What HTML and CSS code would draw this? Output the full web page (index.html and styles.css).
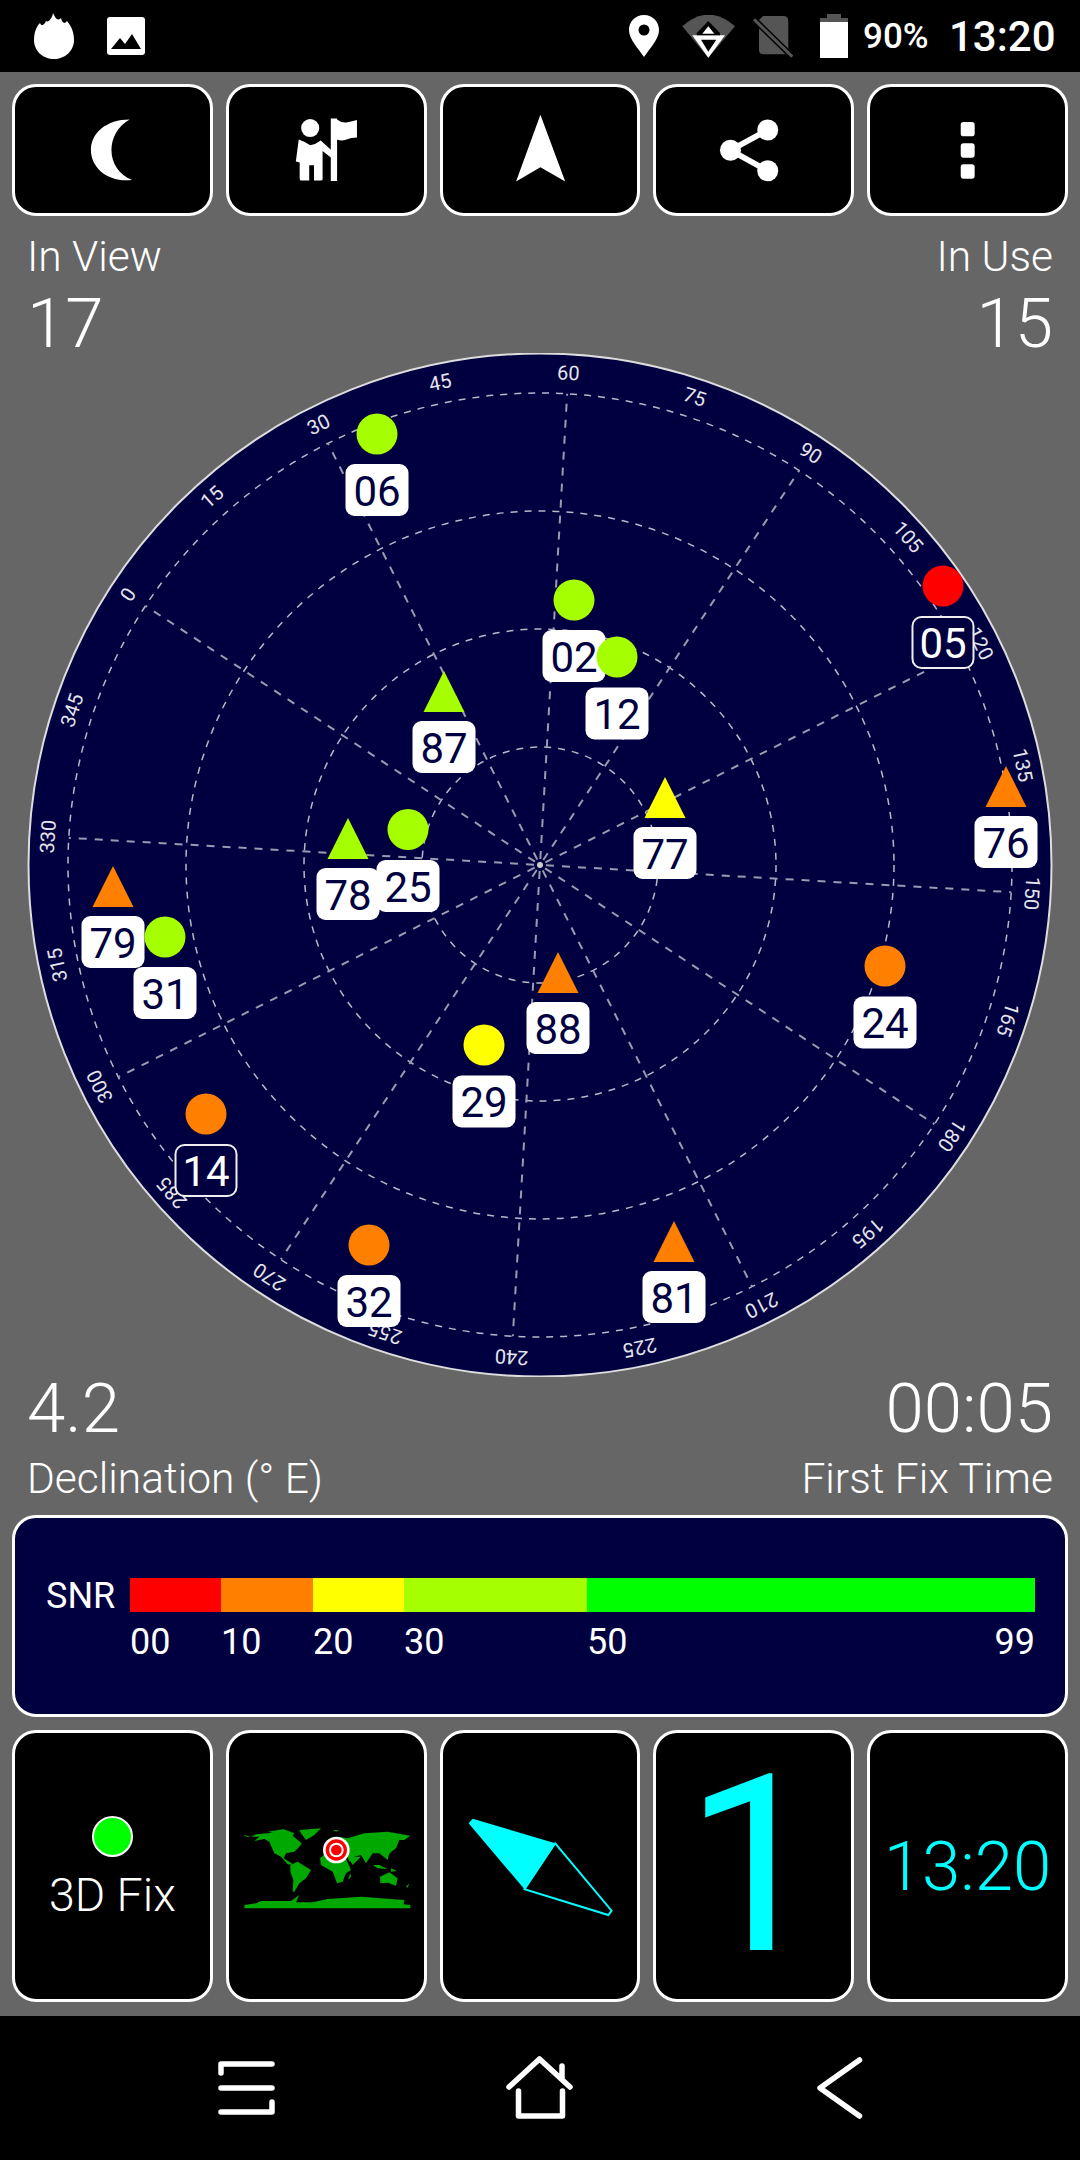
FILE: index.html
```html
<!DOCTYPE html>
<html lang="en">
<head>
<meta charset="utf-8">
<title>GPS Test</title>
<link rel="stylesheet" href="styles.css">
</head>
<body>
<div class="app">
  <header class="status">
    <div class="status-left">
      <svg class="ico-flame" viewBox="0 0 40 46"><path d="M19 0 C21 4 23 9 27 5 C28 9 30 12 33 8 C38 14 40 20 40 27 C40 38 31 46 20 46 C9 46 0 38 0 27 C0 20 2 14 6 10 C7 13 10 13 12 8 C14 10 18 6 19 0Z"/></svg>
      <svg class="ico-image" viewBox="0 0 38 38"><rect width="38" height="38" rx="3" fill="#fff"/><path d="M4 32 L13 21 L18 27 L25 17 L34 32Z" fill="#000"/></svg>
    </div>
    <div class="status-right">
      <svg class="ico-pin" viewBox="0 0 30 42"><path fill-rule="evenodd" d="M15 0 C24 0 30 7 30 15 C30 24 21 33 15 42 C9 33 0 24 0 15 C0 7 6 0 15 0Z M15 9.500 A5.500 5.500 0 1 0 15 20.500 A5.500 5.500 0 1 0 15 9.500Z"/></svg>
      <svg class="ico-wifi" viewBox="683 14 53 43"><path d="M683.300 25.300 Q709.300 2 736 25.300 L709.300 56.700Z" fill="#555"/><path d="M693.300 34.300 H726 L709.300 56.700Z" fill="#fff"/><path d="M697.700 32 L709.300 20 L721 32 V34.300 H697.700Z" fill="#000"/><path d="M703.300 32.700 H715.300 L709.300 25.300Z" fill="#fff"/><path d="M702 38.700 H717.300 L709.300 50.700Z" fill="#000"/></svg>
      <svg class="ico-sim" viewBox="754 14 40 44"><path d="M764 16 H784 Q789.300 16 789.300 21 V50 Q789.300 54.300 785 54.300 H765 Q760 54.300 760 50 V20Z" fill="#555"/><path d="M755 19.300 L793.300 56.700" stroke="#000" stroke-width="6"/><path d="M755 19.300 L793.300 56.700" stroke="#555" stroke-width="3"/></svg>
      <svg class="ico-batt" viewBox="0 0 28 44"><path d="M7 0 H21 V4 H28 V8 H0 V4 H7Z" fill="#555"/><rect y="8" width="28" height="36" fill="#fff"/></svg>
      <span class="batt-pct">90%</span>
      <span class="clock">13:20</span>
    </div>
  </header>

  <main class="content">
    <div class="tiles tiles-top">
      <div class="tile">
        <svg class="tile-svg" viewBox="13 84 200 132"><path d="M131 118 C107 118 90.500 132 90.500 150 C90.500 168 107 184 133.600 181.500 C120 176 112 164 112 150 C112 137 119 125 131 118Z"/></svg>
      </div>
      <div class="tile">
        <svg class="tile-svg" viewBox="226 84 200 132"><circle cx="309" cy="127" r="9.500"/><rect x="330.600" y="117" width="6.600" height="65.500"/><path d="M337 118 Q342 122 348 121 Q353 120 358 118.500 V137 Q352 137 347 139 Q342 141 337 139Z"/><path d="M297 139 Q303 141 309 145 Q315 144 320 140 L331 150 V158 L322 151 V181 Q322 182 320 182 H313 V166 H308 V182 H300 Q298 182 298 180 V163 L294 162Z"/></svg>
      </div>
      <div class="tile">
        <svg class="tile-svg" viewBox="440 84 200 132"><path d="M540 113 L566 183 L540 168 L514.500 183Z"/></svg>
      </div>
      <div class="tile">
        <svg class="tile-svg" viewBox="653 84 200 132"><circle cx="768" cy="129" r="11"/><circle cx="729" cy="150.300" r="11"/><circle cx="768" cy="171.700" r="11"/><path class="share-line" d="M768 129 L729 150.300 L768 171.700"/></svg>
      </div>
      <div class="tile">
        <svg class="tile-svg" viewBox="867 84 200 132"><rect x="960" y="120.700" width="14.600" height="15" rx="3"/><rect x="960" y="143" width="14.600" height="15" rx="3"/><rect x="960" y="165" width="14.600" height="15" rx="3"/></svg>
      </div>
    </div>

    <div class="stats stats-top">
      <div>
        <div class="stat-label">In View</div>
        <div class="stat-value">17</div>
      </div>
      <div class="stat-right">
        <div class="stat-label">In Use</div>
        <div class="stat-value">15</div>
      </div>
    </div>

    <svg class="sky" viewBox="0 353 1080 1024">
      <circle class="disc" cx="540" cy="865" r="511.500"/>
      <g transform="translate(540 865)">
        <g class="rings">
          <circle r="118"/><circle r="236"/><circle r="354"/><circle r="472"/>
        </g>
        <g class="spokes">
          <line y2="-472" transform="rotate(-56.7)"/>
          <line y2="-472" transform="rotate(-26.7)"/>
          <line y2="-472" transform="rotate(3.3)"/>
          <line y2="-472" transform="rotate(33.3)"/>
          <line y2="-472" transform="rotate(63.3)"/>
          <line y2="-472" transform="rotate(93.3)"/>
          <line y2="-472" transform="rotate(123.3)"/>
          <line y2="-472" transform="rotate(153.3)"/>
          <line y2="-472" transform="rotate(183.3)"/>
          <line y2="-472" transform="rotate(213.3)"/>
          <line y2="-472" transform="rotate(243.3)"/>
          <line y2="-472" transform="rotate(273.3)"/>
        </g>
        <circle class="hub" r="3"/>
        <g class="degs">
          <text y="-486" transform="rotate(-56.7)">0</text>
          <text y="-486" transform="rotate(-41.7)">15</text>
          <text y="-486" transform="rotate(-26.7)">30</text>
          <text y="-486" transform="rotate(-11.7)">45</text>
          <text y="-486" transform="rotate(3.3)">60</text>
          <text y="-486" transform="rotate(18.3)">75</text>
          <text y="-486" transform="rotate(33.3)">90</text>
          <text y="-486" transform="rotate(48.3)">105</text>
          <text y="-486" transform="rotate(63.3)">120</text>
          <text y="-486" transform="rotate(78.3)">135</text>
          <text y="-486" transform="rotate(93.3)">150</text>
          <text y="-486" transform="rotate(108.3)">165</text>
          <text y="-486" transform="rotate(123.3)">180</text>
          <text y="-486" transform="rotate(138.3)">195</text>
          <text y="-486" transform="rotate(153.3)">210</text>
          <text y="-486" transform="rotate(168.3)">225</text>
          <text y="-486" transform="rotate(183.3)">240</text>
          <text y="-486" transform="rotate(198.3)">255</text>
          <text y="-486" transform="rotate(213.3)">270</text>
          <text y="-486" transform="rotate(228.3)">285</text>
          <text y="-486" transform="rotate(243.3)">300</text>
          <text y="-486" transform="rotate(258.3)">315</text>
          <text y="-486" transform="rotate(273.3)">330</text>
          <text y="-486" transform="rotate(288.3)">345</text>
        </g>
      </g>

      <g class="sat" transform="translate(377 434)"><circle class="lime" r="20.500"/><rect x="-31.500" y="30" width="63" height="52" rx="9"/><text y="71.500">06</text></g>
      <g class="sat" transform="translate(444 671)"><path class="lime" d="M0 0 L20.500 41 H-20.500Z"/><rect x="-31.500" y="50" width="63" height="52" rx="9"/><text y="91.500">87</text></g>
      <g class="sat" transform="translate(574 600)"><circle class="lime" r="20.500"/><rect x="-31.500" y="30" width="63" height="52" rx="9"/><text y="71.500">02</text></g>
      <g class="sat" transform="translate(617 657)"><circle class="lime" r="20.500"/><rect x="-31.500" y="30.500" width="63" height="52" rx="9"/><text y="72">12</text></g>
      <g class="sat sat-unused" transform="translate(943 586)"><circle class="red" r="20.500"/><rect x="-30.500" y="31" width="61" height="51" rx="9"/><text y="72">05</text></g>
      <g class="sat" transform="translate(1006 766)"><path class="orange" d="M0 0 L20.500 41 H-20.500Z"/><rect x="-31.500" y="50" width="63" height="52" rx="9"/><text y="91.500">76</text></g>
      <g class="sat" transform="translate(665 777)"><path class="yellow" d="M0 0 L20.500 41 H-20.500Z"/><rect x="-31.500" y="50" width="63" height="52" rx="9"/><text y="91.500">77</text></g>
      <g class="sat" transform="translate(348 818)"><path class="lime" d="M0 0 L20.500 41 H-20.500Z"/><rect x="-31.500" y="50" width="63" height="52" rx="9"/><text y="91.500">78</text></g>
      <g class="sat" transform="translate(408 829.500)"><circle class="lime" r="20.500"/><rect x="-31.500" y="30.500" width="63" height="52" rx="9"/><text y="72">25</text></g>
      <g class="sat" transform="translate(113 866)"><path class="orange" d="M0 0 L20.500 41 H-20.500Z"/><rect x="-31.500" y="50" width="63" height="52" rx="9"/><text y="91.500">79</text></g>
      <g class="sat" transform="translate(165 937)"><circle class="lime" r="20.500"/><rect x="-31.500" y="30" width="63" height="52" rx="9"/><text y="71.500">31</text></g>
      <g class="sat" transform="translate(484 1045)"><circle class="yellow" r="20.500"/><rect x="-31.500" y="30.500" width="63" height="52" rx="9"/><text y="72">29</text></g>
      <g class="sat sat-unused" transform="translate(206 1114)"><circle class="orange" r="20.500"/><rect x="-30.500" y="31" width="61" height="51" rx="9"/><text y="72">14</text></g>
      <g class="sat" transform="translate(369 1245)"><circle class="orange" r="20.500"/><rect x="-31.500" y="30" width="63" height="52" rx="9"/><text y="71.500">32</text></g>
      <g class="sat" transform="translate(558 952)"><path class="orange" d="M0 0 L20.500 41 H-20.500Z"/><rect x="-31.500" y="50" width="63" height="52" rx="9"/><text y="91.500">88</text></g>
      <g class="sat" transform="translate(885 966)"><circle class="orange" r="20.500"/><rect x="-31.500" y="30.500" width="63" height="52" rx="9"/><text y="72">24</text></g>
      <g class="sat" transform="translate(674 1221)"><path class="orange" d="M0 0 L20.500 41 H-20.500Z"/><rect x="-31.500" y="50" width="63" height="52" rx="9"/><text y="91.500">81</text></g>
    </svg>

    <div class="stats stats-bottom">
      <div>
        <div class="stat-value">4.2</div>
        <div class="stat-label">Declination (° E)</div>
      </div>
      <div class="stat-right">
        <div class="stat-value">00:05</div>
        <div class="stat-label">First Fix Time</div>
      </div>
    </div>

    <section class="snr">
      <div class="snr-name">SNR</div>
      <div class="snr-scale">
        <div class="snr-bar">
          <div class="seg s-red"></div>
          <div class="seg s-orange"></div>
          <div class="seg s-yellow"></div>
          <div class="seg s-lime"></div>
          <div class="seg s-green"></div>
        </div>
        <div class="snr-ticks">
          <span>00</span><span>10</span><span>20</span><span>30</span>
          <span class="tick-last"><span>50</span><span>99</span></span>
        </div>
      </div>
    </section>

    <div class="tiles tiles-bottom">
      <div class="tile tile-fix">
        <div class="fix-dot"></div>
        <div class="fix-text">3D Fix</div>
      </div>
      <div class="tile tile-map">
        <svg class="map" viewBox="0 0 570 300">
          <g class="land">
            <path d="M40 60 L60 65 L75 58 L110 55 L130 50 L165 45 L190 55 L185 62 L212 85 L205 95 L190 110 L165 115 L158 130 L175 140 L190 150 L170 148 L150 125 L130 115 L115 80 L100 72 L70 78 L85 65 L45 65Z"/>
            <path d="M110 50 L160 42 L165 50 L130 52Z"/>
            <path d="M205 45 L270 40 L250 60 L225 75 L210 55Z"/>
            <path d="M178 150 L200 140 L240 165 L225 190 L205 205 L190 230 L185 230 L187 195 L178 170Z"/>
            <path d="M350 70 L400 55 L470 50 L538 62 L520 75 L505 75 L495 100 L475 115 L470 135 L445 115 L425 115 L405 145 L390 120 L370 125 L355 140 L350 125 L280 120 L290 90 L320 65Z"/>
            <path d="M267 130 L285 115 L340 120 L360 165 L345 175 L335 200 L318 205 L305 170 L270 150Z"/>
            <path d="M350 125 L390 125 L365 150Z"/>
            <path d="M352 190 L358 175 L360 185 L354 192Z"/>
            <path d="M447 185 L475 172 L500 190 L495 212 L470 203 L448 205Z"/>
            <path d="M425 150 L445 150 L470 162 L440 160Z M480 160 L498 168 L480 170Z M470 100 L480 110 L472 120Z M525 215 L535 205 L530 218Z M305 45 L325 46 L315 50Z"/>
            <path d="M40 270 L75 265 L90 258 L180 258 L205 240 L195 262 L245 262 L290 252 L390 245 L520 255 L518 268 L538 270 L538 280 L40 280Z"/>
          </g>
          <circle class="tgt-white" cx="316" cy="105" r="40"/>
          <circle class="tgt-red" cx="316" cy="105" r="32"/>
          <circle class="tgt-white" cx="316" cy="105" r="22"/>
          <circle class="tgt-red" cx="316" cy="105" r="16"/>
        </svg>
      </div>
      <div class="tile">
        <svg class="tile-svg compass" viewBox="440 1730 200 272">
          <path class="needle-fill" d="M468.600 1823.300 L472.700 1818.700 L555.200 1843.300 L524.500 1889.300Z"/>
          <path class="needle-line" d="M555.200 1843.300 L611.600 1910.700 L608.300 1915 L524.500 1889.300Z"/>
        </svg>
      </div>
      <div class="tile tile-num">1</div>
      <div class="tile tile-time">13:20</div>
    </div>
  </main>

  <nav class="navbar">
    <svg class="nav-svg" viewBox="0 2016 1080 144">
      <path d="M221 2073 V2064 H272 M221 2088 H272 M272 2102 V2112 H221"/>
      <path d="M509 2087 L539.500 2059 L570 2087 M562 2066 V2078 M518.500 2091 V2116 H562.500 V2091"/>
      <path d="M859.500 2060 L820 2088 L859.500 2116"/>
    </svg>
  </nav>
</div>
</body>
</html>
```

FILE: styles.css
```css
* { box-sizing: border-box; }
html, body { margin: 0; padding: 0; }
body {
  width: 1080px;
  height: 2160px;
  overflow: hidden;
  background: #666;
  color: #fff;
  font-family: Roboto, "Liberation Sans", sans-serif;
}
svg { display: block; }
.app { display: flex; flex-direction: column; height: 2160px; }

/* status bar */
.status {
  height: 72px;
  background: #000;
  display: flex;
  justify-content: space-between;
  align-items: center;
  padding: 0 27px 0 34px;
  fill: #fff;
}
.status-left, .status-right { display: flex; align-items: center; }
.ico-flame { width: 40px; height: 46px; }
.ico-image { width: 38px; height: 38px; margin-left: 33px; }
.ico-pin { width: 30px; height: 42px; }
.ico-wifi { width: 53px; height: 43px; margin-left: 23px; }
.ico-sim { width: 40px; height: 44px; margin-left: 18px; }
.ico-batt { width: 28px; height: 44px; margin-left: 27px; }
.batt-pct { font-size: 35px; font-weight: 500; margin-left: 15px; width: 64px; white-space: nowrap; }
.clock { font-size: 42px; font-weight: 500; margin-left: 22px; width: 104px; text-align: right; white-space: nowrap; }

/* main column */
.content { flex: 1; display: flex; flex-direction: column; padding: 12px 12px 0; }
.tiles { display: grid; grid-template-columns: repeat(5, 1fr); gap: 13px; }
.tile {
  background: #000;
  border: 3px solid #fff;
  border-radius: 24px;
  fill: #fff;
  overflow: hidden;
}
.tiles-top .tile { height: 132px; }
.tile-svg { width: 100%; height: 100%; }
.share-line { fill: none; stroke: #fff; stroke-width: 6; }

.stats { display: flex; justify-content: space-between; padding: 0 15px; }
.stats-top { margin-top: 17px; height: 120px; }
.stats-top .stat-value { margin-top: 5px; }
.stats-bottom { height: 144px; margin-top: -6px; }
.stats-bottom .stat-label { margin-top: 8px; }
.stat-right { text-align: right; }
.stat-label { font-size: 42.500px; line-height: 48px; font-weight: 300; }
.stat-value { font-size: 69px; line-height: 76px; font-weight: 300; }

/* sky plot */
.sky { width: 1080px; height: 1024px; margin-left: -12px; flex: none; }
.disc { fill: #000040; stroke: #ddd; stroke-width: 2; }
.rings circle { fill: none; stroke: #b8b8c8; stroke-width: 1.500; stroke-dasharray: 7 7; }
.spokes line { stroke: #9a9ab0; stroke-width: 2; stroke-dasharray: 8 8; stroke-dashoffset: 10; }
.hub { fill: #ccc; }
.degs text { fill: #e4e4ec; font-size: 20px; text-anchor: middle; }
.sat rect { fill: #fff; }
.sat text { fill: #000040; font-size: 42px; text-anchor: middle; }
.sat-unused rect { fill: #000040; stroke: #eee; stroke-width: 2; }
.sat-unused text { fill: #fff; }
.lime { fill: #a6ff00; }
.orange { fill: #ff8000; }
.yellow { fill: #ff0; }
.red { fill: #f00; }

/* snr panel */
.snr {
  height: 202px;
  background: #000040;
  border: 3px solid #fff;
  border-radius: 24px;
  display: flex;
  padding: 60px 30px 0 31px;
  margin-bottom: 13px;
}
.snr-name { width: 84px; font-size: 36px; line-height: 36px; font-weight: 400; }
.snr-scale { flex: 1; }
.snr-bar { display: flex; height: 34px; }
.seg { height: 100%; }
.s-red, .snr-ticks > span:nth-child(1) { width: 91px; }
.s-orange, .snr-ticks > span:nth-child(2) { width: 92px; }
.s-yellow, .snr-ticks > span:nth-child(3) { width: 91px; }
.s-lime, .snr-ticks > span:nth-child(4) { width: 183px; }
.s-green { flex: 1; }
.s-red { background: #f00; }
.s-orange { background: #ff8000; }
.s-yellow { background: #ff0; }
.s-lime { background: #a6ff00; }
.s-green { background: #0f0; }
.snr-ticks { display: flex; font-size: 36px; line-height: 44px; margin-top: 8px; }
.tick-last { flex: 1; display: flex; justify-content: space-between; }

/* bottom tiles */
.tiles-bottom .tile {
  height: 272px;
  display: flex;
  align-items: center;
  justify-content: center;
}
.tile-fix { flex-direction: column; }
.fix-dot {
  width: 41px;
  height: 41px;
  border-radius: 50%;
  background: #0f0;
  border: 2px solid #fff;
  margin-top: 6px;
}
.fix-text { font-size: 46.500px; line-height: 54px; font-weight: 300; margin-top: 11px; }
.tile-map { position: relative; }
.map { position: absolute; left: 2px; top: 82px; width: 190px; height: 100px; }
.land { fill: #00a800; }
.tgt-white { fill: #fff; }
.tgt-red { fill: #f00; }
.tile-svg.compass { margin: -3px; width: 200px; height: 272px; flex: none; }
.needle-fill { fill: #0ff; }
.needle-line { fill: none; stroke: #0ff; stroke-width: 2; }
.tile-num { color: #0ff; font-size: 246px; line-height: 1; font-weight: 400; }
.tile-time { color: #0ff; font-size: 69px; font-weight: 300; }

/* nav */
.navbar { height: 144px; background: #000; flex: none; }
.nav-svg { width: 1080px; height: 144px; }
.nav-svg path { fill: none; stroke: #fff; stroke-width: 5.500; stroke-linecap: round; stroke-linejoin: round; }
```
